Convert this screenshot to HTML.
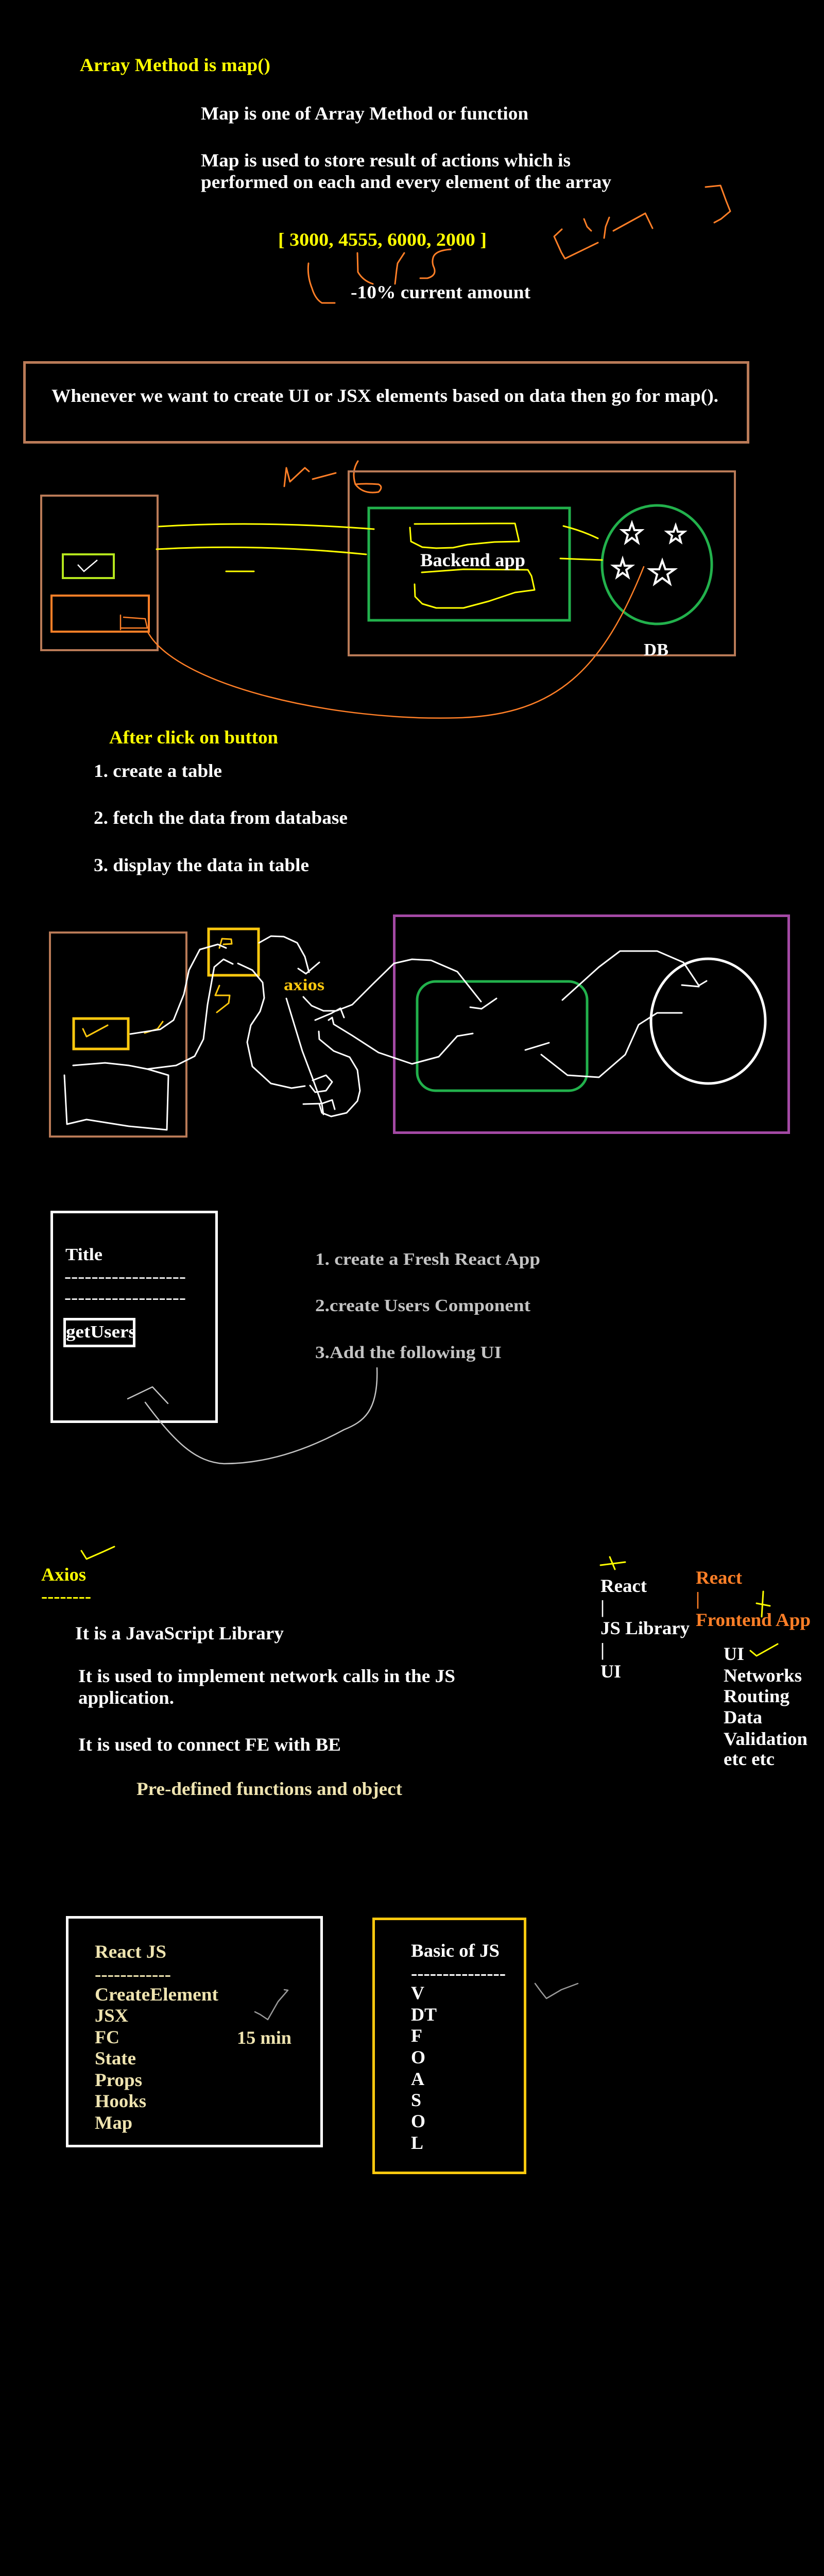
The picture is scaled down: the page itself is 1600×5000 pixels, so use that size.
<!DOCTYPE html>
<html><head><meta charset="utf-8"><style>
html,body{margin:0;padding:0;background:#000;}
svg{display:block;}
text{font-family:"Liberation Serif","Times New Roman",serif;font-weight:bold;}
</style></head><body>
<svg width="1600" height="5000" viewBox="0 0 1600 5000" xmlns="http://www.w3.org/2000/svg">
<rect width="1600" height="5000" fill="#000"/>
<!-- Section 1 -->
<g font-size="36">
<text x="155" y="138" fill="#ffff00" textLength="370" lengthAdjust="spacingAndGlyphs">Array Method is map()</text>
<text x="390" y="232" fill="#fff" textLength="636" lengthAdjust="spacingAndGlyphs">Map is one of Array Method or function</text>
<text x="390" y="323" fill="#fff" textLength="718" lengthAdjust="spacingAndGlyphs">Map is used to store result of actions which is</text>
<text x="390" y="365" fill="#fff" textLength="797" lengthAdjust="spacingAndGlyphs">performed on each and every element of the array</text>
<text x="540" y="477" fill="#ffff00" textLength="405" lengthAdjust="spacingAndGlyphs">[ 3000, 4555, 6000, 2000  ]</text>
<text x="681" y="579" fill="#fff" textLength="349" lengthAdjust="spacingAndGlyphs">-10% current amount</text>
</g>
<g fill="none" stroke="#ff7f27" stroke-width="3" stroke-linecap="round" stroke-linejoin="round">
<path d="M599 511 Q596 535 606 560 Q612 580 625 588 L650 588"/>
<path d="M694 491 L695 528 Q705 545 724 551"/>
<path d="M785 491 L772 511 L770 525 L767 551"/>
<path d="M875 484 Q845 486 841 500 Q838 510 843 520 Q848 535 830 540 L816 540"/>
<path d="M1091 445 L1076 459 L1090 490 L1097 502 L1161 471"/>
<path d="M1134 425 L1140 440 L1148 448"/>
<path d="M1183 422 L1176 440 L1173 462"/>
<path d="M1191 448 L1253 414 L1267 443"/>
<path d="M1370 363 L1399 360 L1410 390 L1418 410 L1400 425 L1387 432"/>
</g>
<rect x="47.5" y="703.5" width="1405" height="155" fill="none" stroke="#b97a57" stroke-width="5"/>
<text x="100" y="780" font-size="36" fill="#fff" textLength="1295" lengthAdjust="spacingAndGlyphs">Whenever we want to create UI or JSX elements based on data then go for map().</text>

<!-- Section 2 diagram -->
<g fill="none" stroke="#ff7f27" stroke-width="3" stroke-linecap="round" stroke-linejoin="round">
<path d="M552 944 L556 908 L563 935 L592 908 L600 915"/>
<path d="M607 930 L652 918"/>
<path d="M695 895 Q682 915 690 940 Q705 960 735 955 Q745 945 735 940 Q710 938 690 940"/>
</g>
<rect x="80" y="962" width="226" height="300" fill="none" stroke="#b97a57" stroke-width="4"/>
<rect x="122" y="1076" width="99" height="46" fill="none" stroke="#b5e61d" stroke-width="4"/>
<rect x="100" y="1156" width="189" height="70" fill="none" stroke="#ff7f27" stroke-width="4"/>
<rect x="677" y="915" width="750" height="357" fill="none" stroke="#b97a57" stroke-width="4"/>
<rect x="716" y="986" width="390" height="218" fill="none" stroke="#22b14c" stroke-width="5"/>
<ellipse cx="1275.5" cy="1096" rx="106.5" ry="115" fill="none" stroke="#22b14c" stroke-width="5"/>
<path d="M151 1096 L163 1109 L189 1087" fill="none" stroke="#fff" stroke-width="2.5"/>
<g fill="none" stroke="#ffff00" stroke-width="3" stroke-linecap="round" stroke-linejoin="round">
<path d="M308 1022 Q500 1010 726 1027"/>
<path d="M304 1066 Q500 1055 711 1076"/>
<path d="M439 1109 L493 1109"/>
<path d="M805 1017 L965 1016 L1000 1016 L1008 1051 L960 1052 L908 1057 L880 1063 L847 1064 L820 1062 L798 1051 L796 1024"/>
<path d="M819 1111 L900 1105 L1025 1106 L1032 1118 L1038 1145 L1000 1150 L949 1167 L900 1180 L847 1180 L820 1172 L806 1158 L805 1134"/>
<path d="M1094 1021 Q1130 1030 1161 1045"/>
<path d="M1088 1084 L1169 1087"/>
</g>
<text x="816" y="1099" font-size="36" fill="#fff" textLength="204" lengthAdjust="spacingAndGlyphs">Backend app</text>
<text x="1250" y="1272" font-size="34" fill="#fff" textLength="48" lengthAdjust="spacingAndGlyphs">DB</text>
<g fill="none" stroke="#fff" stroke-width="4" stroke-linejoin="miter">
<polygon points="1227,1015 1232,1029 1246,1029 1235,1038 1239,1053 1227,1044 1215,1053 1219,1038 1208,1029 1222,1029"/>
<polygon points="1312,1020 1316,1032 1329,1032 1319,1040 1322,1052 1312,1045 1302,1052 1305,1040 1295,1032 1308,1032"/>
<polygon points="1209,1085 1213,1098 1227,1098 1216,1106 1220,1120 1209,1112 1198,1120 1202,1106 1191,1098 1205,1098"/>
<polygon points="1286,1088 1292,1105 1310,1105 1296,1115 1301,1133 1286,1122 1271,1133 1276,1115 1262,1105 1280,1105"/>
</g>
<g fill="none" stroke="#ff7f27" stroke-width="2.5" stroke-linecap="round">
<path d="M234 1194 L234 1222 M234 1219 L286 1219 L282 1201 L240 1198"/>
<path d="M286 1225 C340 1330 650 1402 898 1393 C1080 1385 1170 1300 1250 1100"/>
</g>
<g font-size="36">
<text x="212" y="1443" fill="#ffff00" textLength="328" lengthAdjust="spacingAndGlyphs">After click on button</text>
<text x="182" y="1508" fill="#fff" textLength="249" lengthAdjust="spacingAndGlyphs">1. create a table</text>
<text x="182" y="1599" fill="#fff" textLength="493" lengthAdjust="spacingAndGlyphs">2. fetch the data from database</text>
<text x="182" y="1691" fill="#fff" textLength="418" lengthAdjust="spacingAndGlyphs">3. display the data in table</text>
</g>

<!-- Section 3 axios diagram -->
<rect x="97" y="1810" width="265" height="396" fill="none" stroke="#b97a57" stroke-width="4"/>
<rect x="405" y="1803" width="97" height="90" fill="none" stroke="#ffc90e" stroke-width="5"/>
<rect x="143" y="1977" width="106" height="59" fill="none" stroke="#ffc90e" stroke-width="5"/>
<rect x="765.5" y="1777.5" width="766" height="421" fill="none" stroke="#a349a4" stroke-width="5"/>
<rect x="810" y="1905" width="330" height="212" rx="36" fill="none" stroke="#22b14c" stroke-width="5"/>
<ellipse cx="1375" cy="1982" rx="111" ry="121" fill="none" stroke="#fff" stroke-width="5"/>
<text x="551" y="1922" font-size="32" fill="#ffc90e" textLength="79" lengthAdjust="spacingAndGlyphs">axios</text>
<g fill="none" stroke="#ffc90e" stroke-width="3" stroke-linecap="round" stroke-linejoin="round">
<path d="M426 1840 L431 1822 L449 1823 L450 1832 L434 1833"/>
<path d="M426 1913 L418 1932 L446 1932 L444 1947 L421 1965"/>
<path d="M161 1997 L168 2012 L209 1990"/>
<path d="M281 2005 L306 1997 L316 1983"/>
</g>
<g fill="none" stroke="#fff" stroke-width="3" stroke-linecap="round" stroke-linejoin="round">
<path d="M253 2007 L311 1998 L337 1980 L357 1930 L367 1883 L388 1843 L423 1833 L439 1840"/>
<path d="M142 2068 L204 2063 L250 2068 L286 2075 L327 2087 L324 2193 L250 2186 L168 2173 L130 2182 L125 2087"/>
<path d="M286 2075 L342 2068 L378 2050 L395 2017 L403 1950 L416 1877 L434 1862 L452 1871"/>
<path d="M462 1870 L490 1883 L510 1907 L513 1937 L505 1963 L487 1990 L480 2023 L490 2070 L526 2103 L566 2112 L592 2108"/>
<path d="M503 1830 L526 1817 L551 1818 L577 1830 L592 1857 L600 1887"/>
<path d="M579 1880 L594 1890 L620 1868"/>
<path d="M556 1938 L587 2040 L607 2093 L625 2143 L628 2163"/>
<path d="M607 2097 L633 2087 L645 2100 L633 2117 L612 2120 L602 2107"/>
<path d="M589 2143 L625 2142 L645 2135 L650 2153"/>
<path d="M619 2002 L620 2017 L648 2040 L679 2052 L694 2077 L699 2117 L694 2137 L673 2160 L643 2167 L625 2160 L620 2143"/>
<path d="M589 1935 L605 1952 L628 1962 L653 1962 L684 1950 L724 1910 L765 1870 L800 1862 L837 1864 L888 1886 L934 1944"/>
<path d="M913 1955 L935 1958 L964 1938"/>
<path d="M612 1980 L643 1967 L661 1957 L668 1975"/>
<path d="M638 1980 L645 1975 L648 1988 L684 2010 L735 2043 L800 2065 L852 2051 L888 2011 L918 2006"/>
<path d="M1020 2038 L1066 2024"/>
<path d="M1051 2047 L1102 2087 L1163 2091 L1214 2047 L1240 1989 L1276 1966 L1324 1966"/>
<path d="M1092 1941 L1163 1877 L1204 1846 L1276 1846 L1327 1868 L1357 1913 L1372 1904"/>
<path d="M1324 1912 L1357 1915"/>
</g>

<!-- Section 4 -->
<rect x="100.5" y="2352.5" width="320" height="407" fill="none" stroke="#fff" stroke-width="5"/>
<text x="127" y="2446" font-size="34" fill="#fff" textLength="72" lengthAdjust="spacingAndGlyphs">Title</text>
<text x="125" y="2488" font-size="32" fill="#fff" textLength="236" lengthAdjust="spacingAndGlyphs">------------------</text>
<text x="125" y="2529" font-size="32" fill="#fff" textLength="236" lengthAdjust="spacingAndGlyphs">------------------</text>
<text x="128" y="2596" font-size="34" fill="#fff" textLength="136" lengthAdjust="spacingAndGlyphs">getUsers</text>
<rect x="125.5" y="2560.5" width="135" height="52" fill="none" stroke="#fff" stroke-width="5"/>
<g font-size="34" fill="#c3c3c3">
<text x="612" y="2455" textLength="437" lengthAdjust="spacingAndGlyphs">1. create a Fresh React App</text>
<text x="612" y="2545" textLength="418" lengthAdjust="spacingAndGlyphs">2.create Users Component</text>
<text x="612" y="2636" textLength="362" lengthAdjust="spacingAndGlyphs">3.Add the following UI</text>
</g>
<g fill="none" stroke="#c3c3c3" stroke-width="2.5" stroke-linecap="round" stroke-linejoin="round">
<path d="M732 2655 C735 2740 705 2760 668 2775 C600 2812 520 2841 435 2841 C380 2838 340 2800 282 2722"/>
<path d="M248 2715 L296 2692 L326 2724"/>
</g>

<!-- Section 5 Axios -->
<g font-size="36">
<text x="80" y="3068" fill="#ffff00" textLength="87" lengthAdjust="spacingAndGlyphs">Axios</text>
<text x="80" y="3110" fill="#ffff00" textLength="97" lengthAdjust="spacingAndGlyphs">--------</text>
<text x="146" y="3182" fill="#fff" textLength="405" lengthAdjust="spacingAndGlyphs">It is a JavaScript Library</text>
<text x="152" y="3265" fill="#fff" textLength="732" lengthAdjust="spacingAndGlyphs">It is used to implement network calls in the JS</text>
<text x="152" y="3307" fill="#fff" textLength="186" lengthAdjust="spacingAndGlyphs">application.</text>
<text x="152" y="3398" fill="#fff" textLength="510" lengthAdjust="spacingAndGlyphs">It is used to connect FE with BE</text>
<text x="265" y="3484" fill="#efe4b0" textLength="516" lengthAdjust="spacingAndGlyphs">Pre-defined functions and object</text>
<text x="1166" y="3090" fill="#fff" textLength="90" lengthAdjust="spacingAndGlyphs">React</text>
<text x="1166" y="3131" fill="#fff">|</text>
<text x="1166" y="3172" fill="#fff" textLength="173" lengthAdjust="spacingAndGlyphs">JS Library</text>
<text x="1166" y="3214" fill="#fff">|</text>
<text x="1166" y="3256" fill="#fff" textLength="40" lengthAdjust="spacingAndGlyphs">UI</text>
<text x="1351" y="3074" fill="#ff7f27" textLength="90" lengthAdjust="spacingAndGlyphs">React</text>
<text x="1351" y="3115" fill="#ff7f27">|</text>
<text x="1351" y="3156" fill="#ff7f27" textLength="223" lengthAdjust="spacingAndGlyphs">Frontend App</text>
<text x="1405" y="3222" fill="#fff" textLength="40" lengthAdjust="spacingAndGlyphs">UI</text>
<text x="1405" y="3264" fill="#fff" textLength="152" lengthAdjust="spacingAndGlyphs">Networks</text>
<text x="1405" y="3304" fill="#fff" textLength="128" lengthAdjust="spacingAndGlyphs">Routing</text>
<text x="1405" y="3345" fill="#fff" textLength="75" lengthAdjust="spacingAndGlyphs">Data</text>
<text x="1405" y="3387" fill="#fff" textLength="163" lengthAdjust="spacingAndGlyphs">Validation</text>
<text x="1405" y="3426" fill="#fff" textLength="99" lengthAdjust="spacingAndGlyphs">etc etc</text>
</g>
<g fill="none" stroke="#ffff00" stroke-width="3" stroke-linecap="round" stroke-linejoin="round">
<path d="M158 3010 L168 3026 L200 3012 L222 3002"/>
<path d="M1166 3038 L1214 3032 M1184 3022 L1194 3046"/>
<path d="M1482 3089 L1479 3138 M1469 3112 L1495 3117"/>
<path d="M1457 3204 L1469 3214 L1510 3191"/>
</g>

<!-- Section 6 boxes -->
<rect x="130.5" y="3721.5" width="494" height="444" fill="none" stroke="#fff" stroke-width="5"/>
<g font-size="36" fill="#efe4b0">
<text x="184" y="3800" textLength="139" lengthAdjust="spacingAndGlyphs">React JS</text>
<text x="184" y="3844" textLength="148" lengthAdjust="spacingAndGlyphs">------------</text>
<text x="184" y="3883" textLength="240" lengthAdjust="spacingAndGlyphs">CreateElement</text>
<text x="184" y="3924" textLength="65" lengthAdjust="spacingAndGlyphs">JSX</text>
<text x="184" y="3966" textLength="48" lengthAdjust="spacingAndGlyphs">FC</text>
<text x="184" y="4007" textLength="80" lengthAdjust="spacingAndGlyphs">State</text>
<text x="184" y="4049" textLength="92" lengthAdjust="spacingAndGlyphs">Props</text>
<text x="184" y="4090" textLength="100" lengthAdjust="spacingAndGlyphs">Hooks</text>
<text x="184" y="4132" textLength="73" lengthAdjust="spacingAndGlyphs">Map</text>
<text x="460" y="3967" textLength="106" lengthAdjust="spacingAndGlyphs">15 min</text>
</g>
<rect x="725.5" y="3724.5" width="294" height="493" fill="none" stroke="#ffc90e" stroke-width="5"/>
<g font-size="36" fill="#fff">
<text x="798" y="3798" textLength="172" lengthAdjust="spacingAndGlyphs">Basic of JS</text>
<text x="798" y="3842" textLength="184" lengthAdjust="spacingAndGlyphs">---------------</text>
<text x="798" y="3880">V</text>
<text x="798" y="3922">DT</text>
<text x="798" y="3963">F</text>
<text x="798" y="4005">O</text>
<text x="798" y="4047">A</text>
<text x="798" y="4088">S</text>
<text x="798" y="4129">O</text>
<text x="798" y="4171">L</text>
</g>
<g fill="none" stroke="#9a9a9a" stroke-width="2.5" stroke-linecap="round" stroke-linejoin="round">
<path d="M495 3905 L505 3910 L520 3920 L540 3885 L559 3863 L552 3862"/>
<path d="M1039 3850 L1050 3865 L1061 3879 L1090 3862 L1122 3850"/>
</g>
</svg>
</body></html>
